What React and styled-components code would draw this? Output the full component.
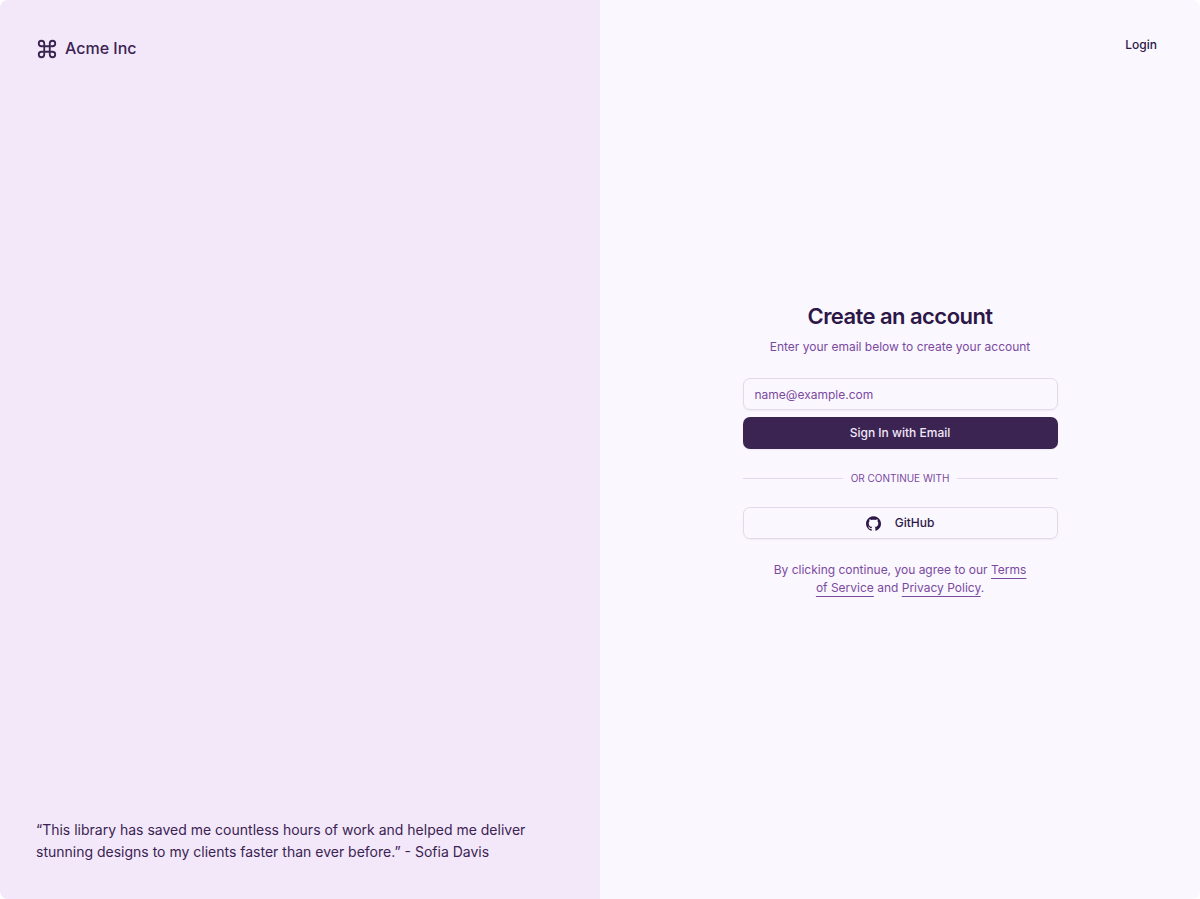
import React from 'react';
import styled, { createGlobalStyle } from 'styled-components';
import { Command } from 'lucide-react';

const GlobalStyle = createGlobalStyle`
  * {
    box-sizing: border-box;
  }
  body {
    margin: 0;
    background: #fff;
    color: #2c1747;
    font-family: Inter, "Liberation Sans", sans-serif;
    font-size: 12px;
    line-height: 18px;
  }
  input, button {
    font: inherit;
  }
`;

const Page = styled.div`
  display: grid;
  grid-template-columns: 1fr 1fr;
  min-height: 100vh;
  border-radius: 8px;
  overflow: hidden;
  background: #fbf7ff;
`;

const BrandPanel = styled.aside`
  display: flex;
  flex-direction: column;
  justify-content: space-between;
  padding: 36px;
  background: #f2e8f9;
  color: #3b2352;
`;

const Brand = styled.div`
  display: flex;
  align-items: center;
  gap: 7px;
  font-size: 16px;
  font-weight: 500;
  line-height: 25px;
`;

const Quote = styled.blockquote`
  margin: 0;
  font-size: 14px;
  line-height: 22px;
`;

const FormPanel = styled.main`
  display: grid;
  grid-template-rows: 1fr auto 1fr;
  padding: 29px;
`;

const TopBar = styled.nav`
  display: flex;
  align-items: flex-start;
  justify-content: flex-end;
`;

const LoginLink = styled.a`
  padding: 7px 14px;
  color: #2c1747;
  font-weight: 500;
  text-decoration: none;
`;

const Content = styled.section`
  display: flex;
  flex-direction: column;
  gap: 22px;
  width: 100%;
  max-width: 315px;
  margin: 0 auto;
`;

const Heading = styled.header`
  display: flex;
  flex-direction: column;
  gap: 7px;
  text-align: center;
`;

const Title = styled.h1`
  margin: 0;
  font-size: 22px;
  font-weight: 600;
  line-height: 29px;
  letter-spacing: -0.025em;
`;

const Muted = styled.p`
  margin: 0;
  color: #7a4a9e;
  text-align: center;
`;

const Terms = styled(Muted)`
  padding: 0 29px;
`;

const Form = styled.form`
  display: flex;
  flex-direction: column;
  gap: 7px;
`;

const EmailInput = styled.input`
  width: 100%;
  height: 32px;
  padding: 0 11px;
  border: 1px solid #e2d9ec;
  border-radius: 7px;
  background: transparent;
  box-shadow: 0 1px 2px rgba(0, 0, 0, 0.05);
  color: #2c1747;

  &::placeholder {
    color: #7a4a9e;
    opacity: 1;
  }
`;

const Button = styled.button`
  display: flex;
  align-items: center;
  justify-content: center;
  gap: 14px;
  width: 100%;
  height: 32px;
  padding: 0 14px;
  border: ${({ $outline }) => ($outline ? '1px solid #e2d9ec' : '0')};
  border-radius: 7px;
  background: ${({ $outline }) => ($outline ? 'transparent' : '#3b2352')};
  box-shadow: 0 1px 2px rgba(0, 0, 0, 0.05);
  color: ${({ $outline }) => ($outline ? '#2c1747' : '#f2e8f9')};
  font-weight: 500;
  cursor: pointer;
`;

const Divider = styled.div`
  display: flex;
  align-items: center;
  gap: 8px;
  color: #7a4a9e;
  font-size: 10px;
  line-height: 14px;
  text-transform: uppercase;

  &::before,
  &::after {
    content: "";
    flex: 1;
    height: 1px;
    background: #e2d9ec;
  }
`;

const TextLink = styled.a`
  color: inherit;
  text-decoration: underline;
  text-underline-offset: 4px;
`;

function GithubIcon() {
  return (
    <svg width="15" height="15" viewBox="0 0 438.549 438.549" aria-hidden="true">
      <path
        fill="currentColor"
        d="M409.132 114.573c-19.608-33.596-46.205-60.194-79.798-79.8-33.598-19.607-70.277-29.408-110.063-29.408-39.781 0-76.472 9.804-110.063 29.408-33.596 19.605-60.192 46.204-79.8 79.8C9.803 148.168 0 184.854 0 224.63c0 47.78 13.94 90.745 41.827 128.906 27.884 38.164 63.906 64.572 108.063 79.227 5.14.954 8.945.283 11.419-1.996 2.475-2.282 3.711-5.14 3.711-8.562 0-.571-.049-5.708-.144-15.417a2549.81 2549.81 0 01-.144-25.406l-6.567 1.136c-4.187.767-9.469 1.092-15.846 1-6.374-.089-12.991-.757-19.842-1.999-6.854-1.231-13.229-4.086-19.13-8.559-5.898-4.473-10.085-10.328-12.56-17.556l-2.855-6.57c-1.903-4.374-4.899-9.233-8.992-14.559-4.093-5.331-8.232-8.945-12.419-10.848l-1.999-1.431c-1.332-.951-2.568-2.098-3.711-3.429-1.142-1.331-1.997-2.663-2.568-3.997-.572-1.335-.098-2.43 1.427-3.289 1.525-.859 4.281-1.276 8.28-1.276l5.708.853c3.807.763 8.516 3.042 14.133 6.851 5.614 3.806 10.229 8.754 13.846 14.842 4.38 7.806 9.657 13.754 15.846 17.847 6.184 4.093 12.419 6.136 18.699 6.136 6.28 0 11.704-.476 16.274-1.423 4.565-.952 8.848-2.383 12.847-4.285 1.713-12.758 6.377-22.559 13.988-29.41-10.848-1.14-20.601-2.857-29.264-5.14-8.658-2.286-17.605-5.996-26.835-11.14-9.235-5.137-16.896-11.516-22.985-19.126-6.09-7.614-11.088-17.61-14.987-29.979-3.901-12.374-5.852-26.648-5.852-42.826 0-23.035 7.52-42.637 22.557-58.817-7.044-17.318-6.379-36.732 1.997-58.24 5.52-1.715 13.706-.428 24.554 3.853 10.85 4.283 18.794 7.952 23.84 10.994 5.046 3.041 9.089 5.618 12.135 7.708 17.705-4.947 35.976-7.421 54.818-7.421s37.117 2.474 54.823 7.421l10.849-6.849c7.419-4.57 16.18-8.758 26.262-12.565 10.088-3.805 17.802-4.853 23.134-3.138 8.562 21.509 9.325 40.922 2.279 58.24 15.036 16.18 22.559 35.787 22.559 58.817 0 16.178-1.958 30.497-5.853 42.966-3.9 12.471-8.941 22.457-15.125 29.979-6.191 7.521-13.901 13.85-23.131 18.986-9.232 5.14-18.182 8.85-26.84 11.136-8.662 2.286-18.415 4.004-29.263 5.146 9.894 8.562 14.842 22.077 14.842 40.539v60.237c0 3.422 1.19 6.279 3.572 8.562 2.379 2.279 6.136 2.95 11.276 1.995 44.163-14.653 80.185-41.062 108.068-79.226 27.88-38.161 41.825-81.126 41.825-128.906-.01-39.771-9.818-76.454-29.414-110.049z"
      />
    </svg>
  );
}

function App() {
  return (
    <>
      <GlobalStyle />
      <Page>
        <BrandPanel>
          <Brand>
            <Command size={22} strokeWidth={2} aria-hidden="true" />
            Acme Inc
          </Brand>
          <Quote>
            “This library has saved me countless hours of work and helped me deliver
            stunning designs to my clients faster than ever before.” - Sofia Davis
          </Quote>
        </BrandPanel>

        <FormPanel>
          <TopBar>
            <LoginLink href="#login">Login</LoginLink>
          </TopBar>

          <Content>
            <Heading>
              <Title>Create an account</Title>
              <Muted>Enter your email below to create your account</Muted>
            </Heading>

            <Form onSubmit={(e) => e.preventDefault()}>
              <EmailInput type="email" aria-label="Email" placeholder="name@example.com" />
              <Button type="submit">Sign In with Email</Button>
            </Form>

            <Divider>Or continue with</Divider>

            <Button type="button" $outline>
              <GithubIcon />
              GitHub
            </Button>

            <Terms>
              By clicking continue, you agree to our{' '}
              <TextLink href="#terms">Terms of Service</TextLink> and{' '}
              <TextLink href="#privacy">Privacy Policy</TextLink>.
            </Terms>
          </Content>
        </FormPanel>
      </Page>
    </>
  );
}

export default App;
